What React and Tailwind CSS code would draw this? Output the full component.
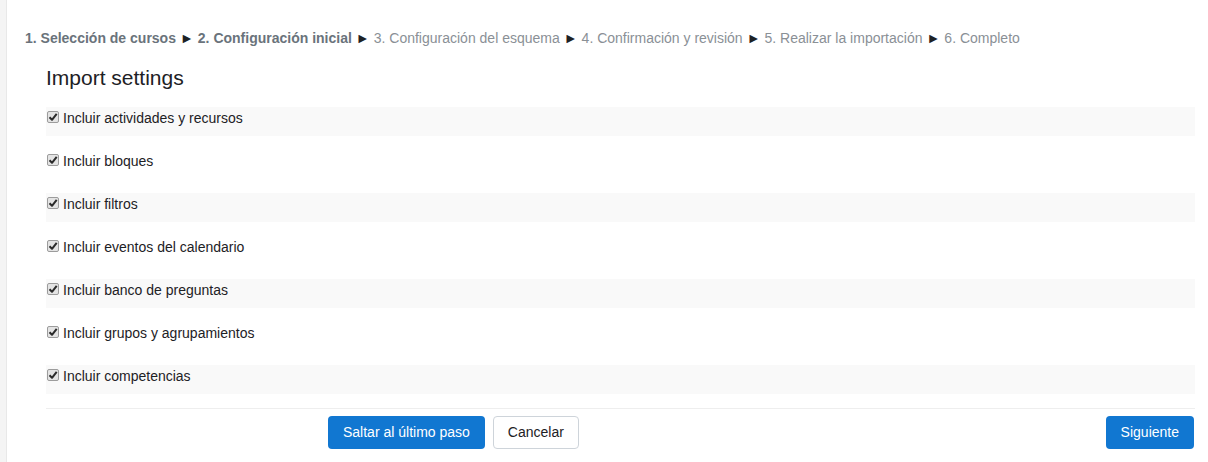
import React from "react";

const rows = [
  "Incluir actividades y recursos",
  "Incluir bloques",
  "Incluir filtros",
  "Incluir eventos del calendario",
  "Incluir banco de preguntas",
  "Incluir grupos y agrupamientos",
  "Incluir competencias",
];

function Check() {
  return (
    <span className="flex h-[12px] w-[12px] shrink-0 items-center justify-center rounded-[2px] border border-[#9c9c9c] bg-[#e4e4e4]">
      <svg width="10" height="10" viewBox="0 0 10 10">
        <path d="M1.5 5.2 L4 7.8 L8.7 1.8" fill="none" stroke="#2b2b2b" strokeWidth="2" strokeLinejoin="round" />
      </svg>
    </span>
  );
}

function Arrow() {
  return <span className="mx-[4px] text-[#1d2125] text-[14px] font-normal">►</span>;
}

export default function App() {
  return (
    <div className="flex min-h-[462px] bg-white font-['Liberation_Sans',Arial,sans-serif] text-[14px] text-[#1d2125]">
      <div className="w-[7px] shrink-0 border-r border-[#e8e8e8] bg-[#f4f4f4]" />
      <div className="flex-1">
        <div className="pl-[18px] pt-[30px] leading-[16px] whitespace-nowrap">
          <span className="font-bold text-[#6a737b]">1. Selección de cursos</span>
          <Arrow />
          <span className="font-bold text-[#6a737b]">2. Configuración inicial</span>
          <Arrow />
          <span className="text-[#8a9096]">3. Configuración del esquema</span>
          <Arrow />
          <span className="text-[#8a9096]">4. Confirmación y revisión</span>
          <Arrow />
          <span className="text-[#8a9096]">5. Realizar la importación</span>
          <Arrow />
          <span className="text-[#8a9096]">6. Completo</span>
        </div>
        <div className="ml-[39px] mr-[13px]">
          <h2 className="mt-[20px] text-[21px] leading-[24px] text-[#1d2125]">Import settings</h2>
          <div className="mt-[17px]">
            {rows.map((r, i) => (
              <div
                key={r}
                className={`mb-[14px] flex h-[29px] items-start gap-[4px] pl-[1px] pt-[4px] ${i % 2 === 0 ? "bg-[#f9f9f9]" : ""}`}
              >
                <span><Check /></span>
                <span className="leading-[14px]">{r}</span>
              </div>
            ))}
          </div>
          <div className="h-px bg-[#eeeeee]" />
          <div className="mt-[7px] flex items-center">
            <div className="flex gap-[8px] pl-[282px]">
              <button className="h-[33px] rounded-[4px] bg-[#1177d1] px-[15px] text-white">Saltar al último paso</button>
              <button className="h-[33px] rounded-[4px] border border-[#ced4da] bg-white px-[14px] text-[#1d2125]">Cancelar</button>
            </div>
            <div className="flex-1" />
            <button className="mr-[1px] h-[33px] rounded-[4px] bg-[#1177d1] px-[15px] text-white">Siguiente</button>
          </div>
        </div>
      </div>
    </div>
  );
}
